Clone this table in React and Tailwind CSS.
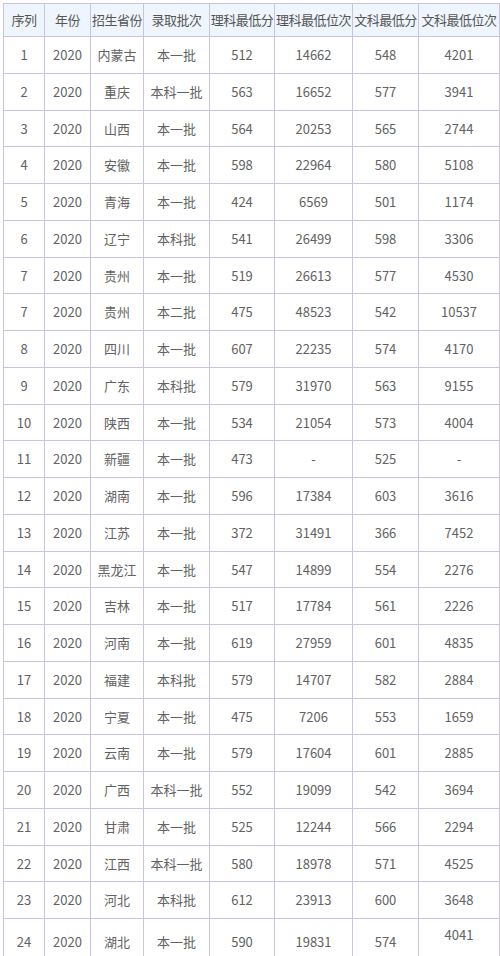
const headers = ["序列", "年份", "招生省份", "录取批次", "理科最低分", "理科最低位次", "文科最低分", "文科最低位次"];
const widths = [41, 46, 53, 66, 65, 78, 66, 81];
const rows = [
  ["1", "内蒙古", "本一批", "512", "14662", "548", "4201"],
  ["2", "重庆", "本科一批", "563", "16652", "577", "3941"],
  ["3", "山西", "本一批", "564", "20253", "565", "2744"],
  ["4", "安徽", "本一批", "598", "22964", "580", "5108"],
  ["5", "青海", "本一批", "424", "6569", "501", "1174"],
  ["6", "辽宁", "本科批", "541", "26499", "598", "3306"],
  ["7", "贵州", "本一批", "519", "26613", "577", "4530"],
  ["7", "贵州", "本二批", "475", "48523", "542", "10537"],
  ["8", "四川", "本一批", "607", "22235", "574", "4170"],
  ["9", "广东", "本科批", "579", "31970", "563", "9155"],
  ["10", "陕西", "本一批", "534", "21054", "573", "4004"],
  ["11", "新疆", "本一批", "473", "-", "525", "-"],
  ["12", "湖南", "本一批", "596", "17384", "603", "3616"],
  ["13", "江苏", "本一批", "372", "31491", "366", "7452"],
  ["14", "黑龙江", "本一批", "547", "14899", "554", "2276"],
  ["15", "吉林", "本一批", "517", "17784", "561", "2226"],
  ["16", "河南", "本一批", "619", "27959", "601", "4835"],
  ["17", "福建", "本科批", "579", "14707", "582", "2884"],
  ["18", "宁夏", "本一批", "475", "7206", "553", "1659"],
  ["19", "云南", "本一批", "579", "17604", "601", "2885"],
  ["20", "广西", "本科一批", "552", "19099", "542", "3694"],
  ["21", "甘肃", "本一批", "525", "12244", "566", "2294"],
  ["22", "江西", "本科一批", "580", "18978", "571", "4525"],
  ["23", "河北", "本科批", "612", "23913", "600", "3648"],
];
const last = ["24", "湖北", "本一批", "590", "19831", "574", "4041"];

export default function App() {
  return (
    <div
      className="w-[500px] h-[956px] overflow-hidden bg-white pl-[3px] pt-[3px] text-[#626262] text-[13px]"
      style={{ fontFamily: '"Noto Sans CJK SC", "Noto Sans", sans-serif' }}
    >
      <table className="table-fixed border-collapse w-[496px]">
        <colgroup>
          {widths.map((w, i) => (
            <col key={i} style={{ width: w }} />
          ))}
        </colgroup>
        <thead>
          <tr className="h-[33px] bg-[#eef5fc]">
            {headers.map((h, i) => (
              <th key={i} className="border border-[#c9c3de] p-0 font-normal text-center align-middle whitespace-nowrap tracking-[-0.5px] text-[#555]">
                {h}
              </th>
            ))}
          </tr>
        </thead>
        <tbody>
          {rows.map((r, ri) => (
            <tr key={ri} className="h-[36.75px]">
              <td className="border border-[#c9c3de] p-0 text-center align-middle">{r[0]}</td>
              <td className="border border-[#c9c3de] p-0 text-center align-middle">2020</td>
              {r.slice(1).map((c, ci) => (
                <td key={ci} className="border border-[#c9c3de] p-0 text-center align-middle whitespace-nowrap">
                  {c}
                </td>
              ))}
            </tr>
          ))}
          <tr className="h-[46px]">
            <td className="border border-[#c9c3de] p-0 text-center align-middle">{last[0]}</td>
            <td className="border border-[#c9c3de] p-0 text-center align-middle">2020</td>
            {last.slice(1, 6).map((c, ci) => (
              <td key={ci} className="border border-[#c9c3de] p-0 text-center align-middle">
                {c}
              </td>
            ))}
            <td className="border border-[#c9c3de] p-0 pb-[14px] text-center align-middle">{last[6]}</td>
          </tr>
        </tbody>
      </table>
    </div>
  );
}
